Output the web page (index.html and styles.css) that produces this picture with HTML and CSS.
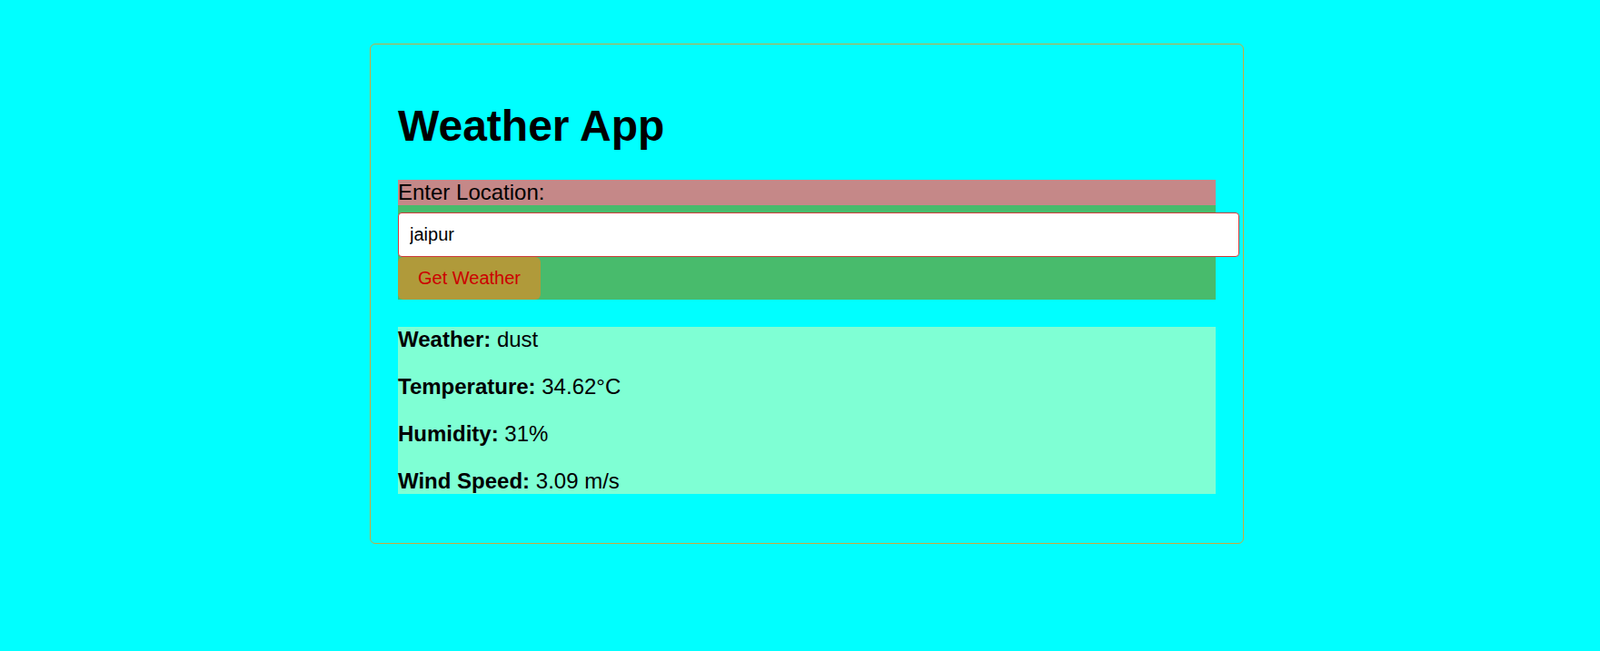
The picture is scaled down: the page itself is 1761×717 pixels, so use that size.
FILE: index.html
```html
<!DOCTYPE html>
<html lang="en">
<head>
<meta charset="UTF-8">
<title>Weather App</title>
<link rel="stylesheet" href="styles.css">
</head>
<body>
<div class="container">
  <h1 class="title">Weather App</h1>
  <div class="form">
    <label class="label" for="loc">Enter Location:</label>
    <input class="input" id="loc" type="text" value="jaipur">
    <button class="btn" type="button">Get Weather</button>
  </div>
  <div class="results">
    <p class="row"><strong>Weather:</strong> dust</p>
    <p class="row"><strong>Temperature:</strong> 34.62°C</p>
    <p class="row"><strong>Humidity:</strong> 31%</p>
    <p class="row"><strong>Wind Speed:</strong> 3.09 m/s</p>
  </div>
</div>
</body>
</html>
```
FILE: styles.css
```css
html, body {
  background: #00ffff;
}
body {
  margin: 8px 0 0 15px;
  font-family: "Liberation Sans", Arial, sans-serif;
  font-size: 24px;
  color: #000;
}
.container {
  max-width: 900px;
  margin: 40px auto;
  padding: 30px;
  border: 1px solid #c9a83e;
  border-radius: 6px;
}
.title {
  font-size: 48px;
  font-weight: bold;
  margin: 32px 0;
}
.form {
  background: #48bb6c;
}
.label {
  display: block;
  background: #c58888;
}
.input {
  display: block;
  width: 100%;
  box-sizing: content-box;
  margin: 8px 0 0;
  padding: 12px;
  font-family: "Liberation Sans", Arial, sans-serif;
  font-size: 20px;
  line-height: 23px;
  border: 1px solid #cf3a3a;
  border-radius: 4px;
  background: #fff;
  color: #000;
}
.btn {
  display: block;
  padding: 11px 22px;
  font-family: "Liberation Sans", Arial, sans-serif;
  font-size: 20px;
  line-height: 25px;
  border: none;
  border-radius: 6px;
  background: #b09a3a;
  color: #cc0000;
}
.results {
  margin-top: 30px;
  background: #7fffd4;
}
.row {
  margin: 24px 0;
}
```
